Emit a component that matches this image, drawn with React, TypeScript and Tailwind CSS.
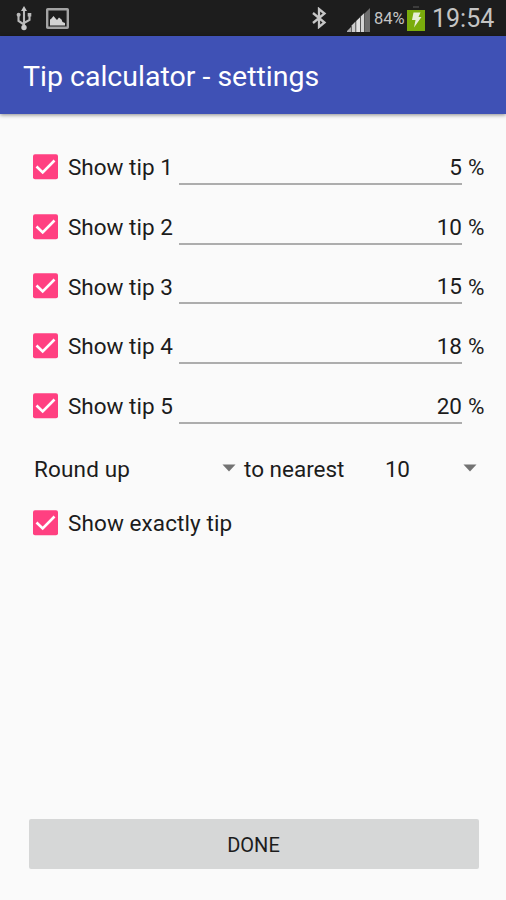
const TIPS = [5, 10, 15, 18, 20];

function UsbIcon() {
  return (
    <svg className="ml-4 h-[26px] w-4 shrink-0" viewBox="0 0 16 26" fill="none" aria-hidden>
      <path d="M8 4v18M8 19.5 2.5 16V10.5M8 18l5.5-3V10" stroke="#b9b9b9" strokeWidth="2.1" />
      <path d="M8 1 11 6H5z" fill="#c4c4c4" />
      <circle cx="8" cy="22.5" r="2.7" fill="#c9c9c9" />
      <circle cx="2.6" cy="9.8" r="2" fill="#b9b9b9" />
      <path d="M11.7 8h3.6v3.6h-3.6z" fill="#b9b9b9" />
    </svg>
  );
}

function PictureIcon() {
  return (
    <svg className="ml-[14px] h-[21px] w-[23px] shrink-0" viewBox="0 0 23 21" fill="none" aria-hidden>
      <rect x="1.2" y="1.2" width="20.6" height="18.6" rx="0.5" stroke="#a3a3a3" strokeWidth="2.4" />
      <path d="M4 17.5v-6l1-.5 2.5-3L10 11l1 1 2-2.5 2.5 2 1 2.5 2.5 1v2.5z" fill="#d2d2d2" />
    </svg>
  );
}

function BluetoothIcon() {
  return (
    <svg className="h-[22px] w-4 shrink-0" viewBox="0 0 16 22" fill="none" aria-hidden>
      <path d="M2 6l11.5 9.5L8 20V2l5.5 4.5L2 16" stroke="#c6c6c6" strokeWidth="2.3" />
    </svg>
  );
}

function SignalIcon() {
  return (
    <svg className="ml-5 mt-[3px] h-6 w-6 shrink-0" viewBox="0 0 24 24" aria-hidden>
      <path d="M0 24v-1l4-4v5z" fill="#aaa" />
      <path d="M4.6 24v-6.6L8.5 13.5V24z" fill="#ccc" />
      <path d="M9.2 24V13L13 9.2V24z" fill="#e2e2e2" />
      <path d="M13.7 24V8.5l3.6-3.6V24z" fill="#d5d5d5" />
      <path d="M18 24V5l5-5v24z" fill="#6e6e6e" />
    </svg>
  );
}

function BatteryIcon() {
  return (
    <svg className="ml-[2px] h-[26px] w-[18px] shrink-0" viewBox="0 0 18 26" aria-hidden>
      <path d="M6 1h6v2H6z" fill="#3c3c3c" />
      <path d="M0 5h18v21H0z" fill="#7aac0c" />
      <path d="M6.5 7.5h7l-2 4.5h3L7 22.5 8.5 15H5z" fill="#e6edd8" />
    </svg>
  );
}

function StatusBar() {
  return (
    <div className="flex h-9 shrink-0 items-center bg-[#1d1d1d] text-[#c4c4c4]">
      <UsbIcon />
      <PictureIcon />
      <div className="ml-auto flex h-full items-center pr-3">
        <BluetoothIcon />
        <SignalIcon />
        <span className="ml-[3px] mt-[3px] w-[31px] text-[16.5px] leading-none whitespace-nowrap">84%</span>
        <BatteryIcon />
        <span className="ml-[7px] w-[62px] text-[25px] leading-none">19:54</span>
      </div>
    </div>
  );
}

function Checkbox() {
  return (
    <svg className="h-[26px] w-[26px] shrink-0" viewBox="0 0 26 26" fill="none" aria-hidden>
      <rect x="0" y="0.2" width="25" height="25" rx="2" fill="#ff4081" />
      <path d="M3.5 12.5 9.7 18.5 21.5 6.5" stroke="#fff" strokeWidth="2.6" />
    </svg>
  );
}

function Caret() {
  return (
    <svg className="h-2 w-[14px] shrink-0" viewBox="0 0 14 8" aria-hidden>
      <path d="M0.5 0.5h13L7 7.5z" fill="#737373" />
    </svg>
  );
}

function TipRow({ index, value }: { index: number; value: number }) {
  return (
    <div className="flex h-[59.75px] items-center">
      <Checkbox />
      <span className="ml-[9px] w-[111px] pt-[2px] whitespace-nowrap">Show tip {index}</span>
      <div className="h-9 w-[283px] border-b-2 border-[#adadad] text-right leading-9">{value}</div>
      <span className="ml-[6px] pt-[2px]">%</span>
    </div>
  );
}

export default function App() {
  return (
    <div className="flex h-[900px] w-[506px] flex-col overflow-hidden bg-[#fafafa] font-['Roboto',sans-serif] text-[22.5px] text-[#1c1c1c]">
      <StatusBar />
      <header className="z-10 flex h-[78px] shrink-0 items-center bg-[#3f51b5] pt-[4px] pl-[23px] text-[28.5px] text-white shadow-[0_1px_4px_rgba(0,0,0,0.45)]">
        <h1>Tip calculator - settings</h1>
      </header>

      <main className="flex flex-1 flex-col pt-[23px] pl-[33px]">
        {TIPS.map((value, i) => (
          <TipRow key={value} index={i + 1} value={value} />
        ))}

        <div className="flex h-[65px] items-center">
          <div className="flex w-[203px] items-center justify-between pl-px">
            <span className="pt-[3px] tracking-[0.15px]">Round up</span>
            <Caret />
          </div>
          <span className="ml-2 w-[141px] pt-[3px] whitespace-nowrap">to nearest</span>
          <div className="flex w-[92px] items-center justify-between">
            <span className="pt-[3px] tracking-[-0.5px]">10</span>
            <Caret />
          </div>
        </div>

        <div className="flex h-11 items-center">
          <Checkbox />
          <span className="ml-[9px] pt-[2px] tracking-[0.1px]">Show exactly tip</span>
        </div>

        <button className="mt-auto mb-[31px] -ml-[4.5px] h-[50px] w-[450px] rounded-[2px] bg-[#d6d7d7] pt-[2px] text-[20px]">
          DONE
        </button>
      </main>
    </div>
  );
}
